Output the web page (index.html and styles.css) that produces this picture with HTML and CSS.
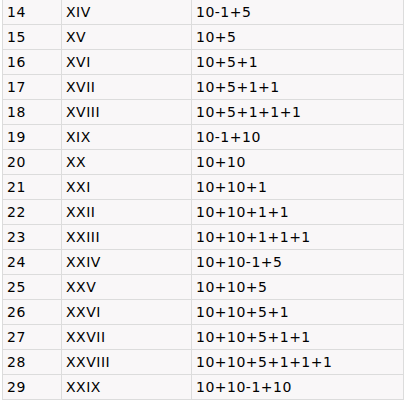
FILE: index.html
```html
<!DOCTYPE html>
<html>
<head>
<meta charset="utf-8">
<link rel="stylesheet" href="styles.css">
</head>
<body>
<div class="wrap">
<table class="roman">
<colgroup><col class="c1"><col class="c2"><col class="c3"></colgroup>
<tbody>
<tr><td>14</td><td>XIV</td><td>10-1+5</td></tr>
<tr><td>15</td><td>XV</td><td>10+5</td></tr>
<tr><td>16</td><td>XVI</td><td>10+5+1</td></tr>
<tr><td>17</td><td>XVII</td><td>10+5+1+1</td></tr>
<tr><td>18</td><td>XVIII</td><td>10+5+1+1+1</td></tr>
<tr><td>19</td><td>XIX</td><td>10-1+10</td></tr>
<tr><td>20</td><td>XX</td><td>10+10</td></tr>
<tr><td>21</td><td>XXI</td><td>10+10+1</td></tr>
<tr><td>22</td><td>XXII</td><td>10+10+1+1</td></tr>
<tr><td>23</td><td>XXIII</td><td>10+10+1+1+1</td></tr>
<tr><td>24</td><td>XXIV</td><td>10+10-1+5</td></tr>
<tr><td>25</td><td>XXV</td><td>10+10+5</td></tr>
<tr><td>26</td><td>XXVI</td><td>10+10+5+1</td></tr>
<tr><td>27</td><td>XXVII</td><td>10+10+5+1+1</td></tr>
<tr><td>28</td><td>XXVIII</td><td>10+10+5+1+1+1</td></tr>
<tr><td>29</td><td>XXIX</td><td>10+10-1+10</td></tr>
</tbody>
</table>
</div>
</body>
</html>
```
FILE: styles.css
```css
html, body {
  margin: 0;
  padding: 0;
  background: #ffffff;
}
.wrap {
  margin: -1px 0 0 2px;
}
.roman {
  border-collapse: collapse;
  table-layout: fixed;
  width: 401px;
  background: #f9f7f8;
  font-family: "DejaVu Sans", Verdana, sans-serif;
  font-size: 14px;
  letter-spacing: 0.5px;
  color: #000000;
}
.c1 { width: 59px; }
.c2 { width: 130px; }
.c3 { width: 212px; }
.roman td {
  border: 1px solid #dcdcdc;
  height: 25px;
  padding: 0 4px;
  box-sizing: border-box;
  line-height: 24px;
  white-space: nowrap;
}
```
